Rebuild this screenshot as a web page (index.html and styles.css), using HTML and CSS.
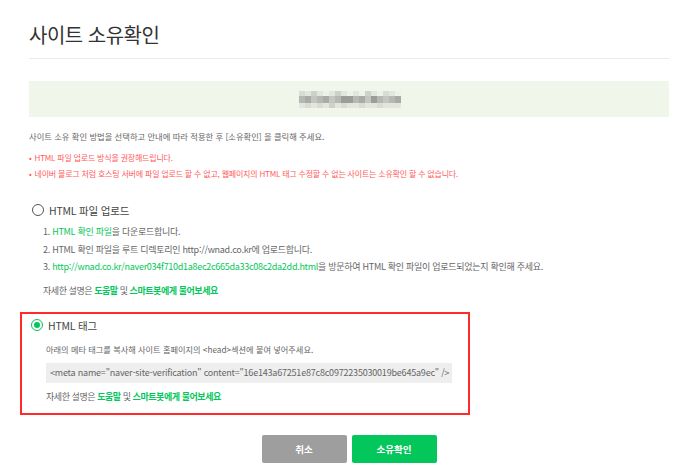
FILE: index.html
```html
<!DOCTYPE html>
<html lang="ko">
<head>
<meta charset="utf-8">
<title>사이트 소유확인</title>
<link rel="stylesheet" href="styles.css">
</head>
<body>
<div class="page">
  <div class="header"><h1 class="title">사이트 소유확인</h1></div>
  <div class="site-box">
    <div class="mosaic">
      <i class="c2"></i><i class="c1"></i><i class="c3"></i><i class="c1"></i><i class="c0"></i><i class="c1"></i><i class="c3"></i><i class="c1"></i><i class="c0"></i><i class="c1"></i><i class="c0"></i><i class="c3"></i><i class="c1"></i><i class="c0"></i><i class="c2"></i><i class="c1"></i><i class="c0"></i>
      <i class="d2"></i><i class="d3"></i><i class="d1"></i><i class="d2"></i><i class="d3"></i><i class="d1"></i><i class="d2"></i><i class="d4"></i><i class="d4"></i><i class="d2"></i><i class="d3"></i><i class="d1"></i><i class="d4"></i><i class="d2"></i><i class="d1"></i><i class="d2"></i><i class="d3"></i>
      <i class="c1"></i><i class="c2"></i><i class="c1"></i><i class="c2"></i><i class="c1"></i><i class="c3"></i><i class="c1"></i><i class="c2"></i><i class="c1"></i><i class="c1"></i><i class="c2"></i><i class="c1"></i><i class="c1"></i><i class="c2"></i><i class="c1"></i><i class="c1"></i><i class="c1"></i>
    </div>
  </div>
  <p class="desc">사이트 소유 확인 방법을 선택하고 안내에 따라 적용한 후 [소유확인] 을 클릭해 주세요.</p>
  <ul class="notes">
    <li>HTML 파일 업로드 방식을 권장해드립니다.</li>
    <li>네이버 블로그 처럼 호스팅 서버에 파일 업로드 할 수 없고, 웹페이지의 HTML 태그 수정할 수 없는 사이트는 소유확인 할 수 없습니다.</li>
  </ul>

  <div class="option">
    <label class="opt-head"><span class="radio"></span>HTML 파일 업로드</label>
    <ol class="steps">
      <li>1. <a class="g" href="#">HTML 확인 파일</a>을 다운로드합니다.</li>
      <li>2. HTML 확인 파일을 루트 디렉토리인 http://wnad.co.kr에 업로드합니다.</li>
      <li>3. <a class="g" href="#">http://wnad.co.kr/naver034f710d1a8ec2c665da33c08c2da2dd.html</a>을 방문하여 HTML 확인 파일이 업로드되었는지 확인해 주세요.</li>
    </ol>
    <p class="more">자세한 설명은 <a class="g b" href="#">도움말</a> 및 <a class="g b" href="#">스마트봇에게 물어보세요</a></p>
  </div>

  <div class="option selected">
    <label class="opt-head"><span class="radio on"></span>HTML 태그</label>
    <p class="info">아래의 메타 태그를 복사해 사이트 홈페이지의 &lt;head&gt;섹션에 붙여 넣어주세요.</p>
    <div class="code">&lt;meta name="naver-site-verification" content="16e143a67251e87c8c0972235030019be645a9ec" /&gt;</div>
    <p class="more">자세한 설명은 <a class="g b" href="#">도움말</a> 및 <a class="g b" href="#">스마트봇에게 물어보세요</a></p>
  </div>

  <div class="buttons">
    <button class="btn cancel">취소</button>
    <button class="btn ok">소유확인</button>
  </div>
</div>
</body>
</html>
```
FILE: styles.css
```css
* { box-sizing: border-box; }
html, body { margin: 0; padding: 0; background: #fff; }
body {
  font-family: "Noto Sans CJK KR", "Noto Sans", sans-serif;
  color: #666;
  width: 697px;
  height: 473px;
  overflow: hidden;
}
.page {
  width: 640px;
  margin-left: 29px;
}
.header {
  padding-top: 22px;
  height: 59px;
  border-bottom: 1px solid #e9e9e9;
}
.title {
  margin: 0;
  font-size: 20px;
  line-height: 26px;
  font-weight: 400;
  color: #333;
  letter-spacing: -0.5px;
}
.site-box {
  margin-top: 22px;
  height: 36px;
  background: #f1f6ea;
  display: flex;
  align-items: center;
  justify-content: center;
}
.mosaic {
  display: grid;
  grid-template-columns: repeat(17, 6px);
  grid-template-rows: 5px 7px 5px;
  margin-left: 2px;
}
.mosaic i { display: block; }
.c0 { background: #eef3e8; }
.c1 { background: #e2e6dc; }
.c2 { background: #d8dcd2; }
.c3 { background: #cdd1c7; }
.d1 { background: #c4c7bf; }
.d2 { background: #b6b9b1; }
.d3 { background: #a9aca5; }
.d4 { background: #9b9e97; }

.desc {
  margin: 11px 0 0;
  font-size: 8.3px;
  line-height: 16px;
  color: #666;
}
.notes {
  list-style: none;
  margin: 6px 0 0;
  padding: 0;
  font-size: 8px;
  letter-spacing: -0.2px;
  line-height: 16px;
  color: #ff5a5a;
}
.notes li::before {
  content: "•";
  margin-right: 3px;
}

.option {
  margin-top: 18px;
}
.opt-head {
  display: flex;
  align-items: center;
  height: 20px;
  font-size: 10.5px;
  letter-spacing: -0.2px;
  color: #444;
  padding-left: 3px;
}
.radio {
  width: 12px;
  height: 12px;
  border: 1.2px solid #555;
  border-radius: 50%;
  margin-right: 5px;
  flex: none;
  display: flex;
  align-items: center;
  justify-content: center;
}
.radio.on {
  border: 1.5px solid #03c75a;
}
.radio.on::after {
  content: "";
  width: 6px;
  height: 6px;
  border-radius: 50%;
  background: #03c75a;
}
.steps {
  list-style: none;
  margin: 3px 0 0;
  padding: 0 0 0 14px;
  font-size: 9px;
  letter-spacing: -0.28px;
  line-height: 17.5px;
}
.g { color: #03c75a; text-decoration: none; }
.g.b { font-weight: 700; }
.more {
  margin: 6px 0 0 14px;
  font-size: 9px;
  letter-spacing: -0.45px;
  line-height: 17.5px;
}

.option.selected {
  margin-left: -9px;
  margin-top: 13px;
  width: 450px;
  height: 103px;
  border: 2px solid #ff2a2a;
  padding: 1px 0 0 0;
}
.selected .opt-head { padding-left: 9px; }
.selected .info {
  margin: 6px 0 0 24px;
  font-size: 8.2px;
  line-height: 17.5px;
}
.code {
  margin: 4px 0 0 24px;
  width: 406px;
  height: 20px;
  background: #eeeeee;
  font-size: 9px;
  letter-spacing: -0.2px;
  line-height: 20px;
  padding-left: 4px;
  color: #666;
  white-space: nowrap;
}
.selected .more {
  margin: 5px 0 0 24px;
}

.buttons {
  display: flex;
  justify-content: center;
  gap: 5px;
  margin-top: 20px;
}
.btn {
  width: 85px;
  height: 28px;
  border: none;
  border-radius: 2px;
  color: #fff;
  font-family: "Noto Sans CJK KR", sans-serif;
  font-size: 9.5px;
  font-weight: 700;
  padding: 0;
}
.cancel { background: #9e9e9e; }
.ok { background: #03c75a; }
```
